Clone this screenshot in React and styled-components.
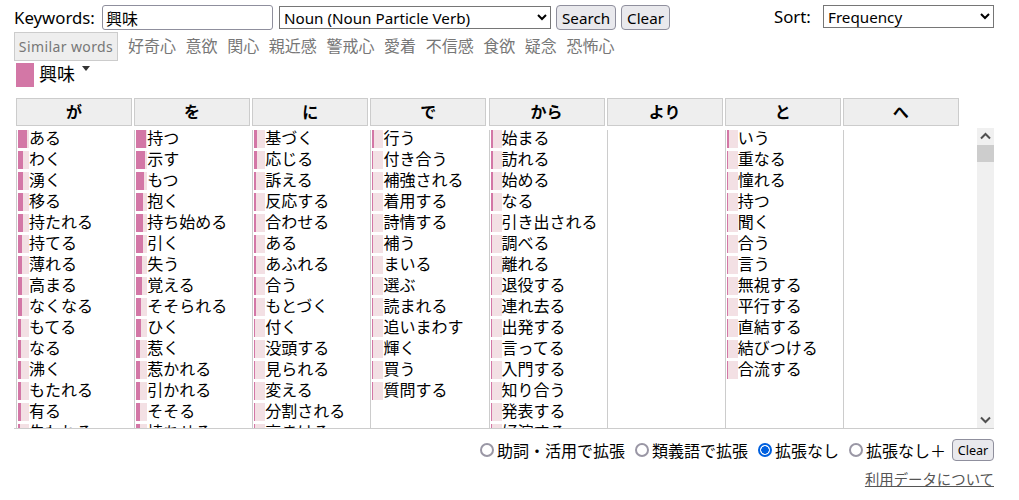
import React from "react";
import styled, { createGlobalStyle } from "styled-components";

const UI_FONT = `"Noto Sans", "Noto Sans CJK JP", sans-serif`;

const GlobalStyle = createGlobalStyle`
  html, body {
    margin: 0;
    background: #fff;
    color: #000;
    font-family: ${UI_FONT};
    font-size: 16px;
  }
`;

const similarWords = ["好奇心", "意欲", "関心", "親近感", "警戒心", "愛着", "不信感", "食欲", "疑念", "恐怖心"];

// [word, fill width in px out of 11]
const columns = [
  { head: "が", rows: [["ある", 9], ["わく", 5], ["湧く", 5], ["移る", 5], ["持たれる", 5], ["持てる", 4], ["薄れる", 4], ["高まる", 4], ["なくなる", 4], ["もてる", 3], ["なる", 3], ["沸く", 3], ["もたれる", 3], ["有る", 3], ["失われる", 2]] },
  { head: "を", rows: [["持つ", 10], ["示す", 9], ["もつ", 8], ["抱く", 7], ["持ち始める", 7], ["引く", 7], ["失う", 6], ["覚える", 6], ["そそられる", 5], ["ひく", 5], ["惹く", 4], ["惹かれる", 4], ["引かれる", 4], ["そそる", 4], ["持ちせる", 4]] },
  { head: "に", rows: [["基づく", 3], ["応じる", 3], ["訴える", 2], ["反応する", 2], ["合わせる", 2], ["ある", 2], ["あふれる", 2], ["合う", 2], ["もとづく", 2], ["付く", 1], ["没頭する", 1], ["見られる", 1], ["変える", 1], ["分割される", 1], ["高まける", 1]] },
  { head: "で", rows: [["行う", 2], ["付き合う", 1], ["補強される", 1], ["着用する", 1], ["詩情する", 1], ["補う", 1], ["まいる", 1], ["選ぶ", 1], ["読まれる", 1], ["追いまわす", 1], ["輝く", 1], ["買う", 1], ["質問する", 1]] },
  { head: "から", rows: [["始まる", 2], ["訪れる", 2], ["始める", 2], ["なる", 2], ["引き出される", 1], ["調べる", 1], ["離れる", 1], ["退役する", 1], ["連れ去る", 1], ["出発する", 1], ["言ってる", 1], ["入門する", 1], ["知り合う", 1], ["発表する", 1], ["好演する", 1]] },
  { head: "より", rows: [] },
  { head: "と", rows: [["いう", 2], ["重なる", 1], ["憧れる", 1], ["持つ", 1], ["聞く", 1], ["合う", 1], ["言う", 1], ["無視する", 1], ["平行する", 1], ["直結する", 1], ["結びつける", 1], ["合流する", 1]] },
  { head: "へ", rows: [] },
];

const App = () => {
  return (
    <Page>
      <GlobalStyle />
      <SearchBar>
        <FieldLabel>Keywords:</FieldLabel>
        <KeywordInput type="text" defaultValue="興味" />
        <PatternSelect defaultValue="npv">
          <option value="npv">Noun (Noun Particle Verb)</option>
        </PatternSelect>
        <Button>Search</Button>
        <Button>Clear</Button>
        <SortGroup>
          <SortLabel>Sort:</SortLabel>
          <SortSelect defaultValue="freq">
            <option value="freq">Frequency</option>
          </SortSelect>
        </SortGroup>
      </SearchBar>

      <SimilarRow>
        <SimilarTag>Similar words</SimilarTag>
        {similarWords.map((w) => (
          <SimilarWord key={w}>{w}</SimilarWord>
        ))}
      </SimilarRow>

      <LegendRow>
        <Swatch />
        <LegendWord>興味</LegendWord>
        <Caret />
      </LegendRow>

      <HeaderRow>
        {columns.map((c) => (
          <HeaderCell key={c.head}>{c.head}</HeaderCell>
        ))}
      </HeaderRow>

      <ResultsFrame>
        <Results>
          <ColumnGrid>
            {columns.map((c) => (
              <Column key={c.head}>
                {c.rows.map(([word, fill]) => (
                  <Row key={word}>
                    <Bar>
                      <BarFill $fill={fill} />
                    </Bar>
                    <Word>{word}</Word>
                  </Row>
                ))}
              </Column>
            ))}
          </ColumnGrid>
        </Results>
        <ScrollBar>
          <ScrollArrow viewBox="0 0 17 17">
            <path d="M4 10.5 L8.5 6 L13 10.5" />
          </ScrollArrow>
          <ScrollThumb />
          <ScrollTrack />
          <ScrollArrow viewBox="0 0 17 17">
            <path d="M4 6.5 L8.5 11 L13 6.5" />
          </ScrollArrow>
        </ScrollBar>
      </ResultsFrame>

      <OptionsRow>
        <RadioLabel>
          <Radio type="radio" name="expand" />
          助詞・活用で拡張
        </RadioLabel>
        <RadioLabel>
          <Radio type="radio" name="expand" />
          類義語で拡張
        </RadioLabel>
        <RadioLabel>
          <Radio type="radio" name="expand" defaultChecked />
          拡張なし
        </RadioLabel>
        <RadioLabel>
          <Radio type="radio" name="expand" />
          拡張なし＋
        </RadioLabel>
        <SmallButton>Clear</SmallButton>
      </OptionsRow>

      <FooterRow>
        <DataLink href="#">利用データについて</DataLink>
      </FooterRow>
    </Page>
  );
};

//Styled Components

const Page = styled.div`
  width: 980px;
  margin-left: 14px;
`;

const SearchBar = styled.div`
  display: flex;
  align-items: center;
  height: 25px;
  padding-top: 5px;
`;

const FieldLabel = styled.span`
  width: 88px;
  font-size: 16.8px;
  line-height: 25px;
  white-space: nowrap;
`;

const KeywordInput = styled.input`
  box-sizing: border-box;
  width: 171px;
  height: 25px;
  padding: 0 3px;
  border: 1px solid #8f8f9d;
  border-radius: 3px;
  font: 16px ${UI_FONT};
  color: #000;
`;

const PatternSelect = styled.select`
  box-sizing: border-box;
  width: 272px;
  height: 23px;
  margin: 0 5px 0 6px;
  padding: 0;
  border: 1px solid #767676;
  border-radius: 0;
  background: #fff;
  font: 15.2px ${UI_FONT};
  color: #000;
`;

const Button = styled.button`
  box-sizing: border-box;
  height: 25px;
  margin-right: 5px;
  padding: 0 5px;
  border: 1px solid #8f8f9d;
  border-radius: 4px;
  background: #e9e9ed;
  font: 15.2px ${UI_FONT};
  color: #000;
`;

const SortGroup = styled.div`
  display: flex;
  align-items: center;
  margin-left: auto;
  margin-top: -2px;
`;

const SortLabel = styled.span`
  width: 49px;
  font-size: 16.8px;
  white-space: nowrap;
`;

const SortSelect = styled.select`
  box-sizing: border-box;
  width: 171px;
  height: 23px;
  padding: 0;
  border: 1px solid #767676;
  border-radius: 0;
  background: #fff;
  font: 15.2px ${UI_FONT};
  color: #000;
`;

const SimilarRow = styled.div`
  display: flex;
  align-items: center;
  gap: 9.6px;
  height: 29px;
  margin-top: 2px;
`;

const SimilarTag = styled.div`
  box-sizing: border-box;
  display: flex;
  align-items: center;
  justify-content: center;
  width: 104px;
  height: 29px;
  margin-right: 0.4px;
  border: 1px solid #ccc;
  background: #eee;
  font-size: 14px;
  letter-spacing: 0.4px;
  white-space: nowrap;
  color: #777;
`;

const SimilarWord = styled.span`
  margin-bottom: 2px;
  color: #777;
  line-height: 27px;
  font-family: "Noto Sans CJK JP", sans-serif;
`;

const LegendRow = styled.div`
  display: flex;
  height: 24px;
  margin: 2px 0 11px 2px;
`;

const Swatch = styled.div`
  width: 18px;
  height: 24px;
  background: #d377a6;
`;

const LegendWord = styled.span`
  margin-left: 5px;
  font: 18px/20px "Noto Sans CJK JP", sans-serif;
`;

const Caret = styled.div`
  width: 0;
  height: 0;
  margin: 3px 0 0 7px;
  border-left: 4px solid transparent;
  border-right: 4px solid transparent;
  border-top: 5px solid #333;
`;

const HeaderRow = styled.div`
  display: grid;
  grid-template-columns: repeat(8, 118.13px);
  height: 28px;
  margin: 0 0 2px 2px;
`;

const HeaderCell = styled.div`
  box-sizing: border-box;
  width: 116px;
  height: 28px;
  border: 1px solid #ccc;
  background: #eee;
  font: bold 16px/24px "Noto Sans CJK JP", sans-serif;
  text-align: center;
`;

const ResultsFrame = styled.div`
  display: flex;
  height: 300px;
  border-bottom: 1px solid #ccc;
`;

const Results = styled.div`
  flex: 1;
  overflow: hidden;
`;

const ColumnGrid = styled.div`
  display: grid;
  grid-template-columns: repeat(8, 118.13px);
  box-sizing: border-box;
  height: 100%;
  padding: 2px 0 0 2px;
`;

const Column = styled.div`
  box-sizing: border-box;
  padding-left: 1px;
  border-left: 1px solid #ccc;
`;

const Row = styled.div`
  display: flex;
  height: 18px;
  margin-bottom: 3px;
`;

const Bar = styled.div`
  width: 11px;
  height: 18px;
  background: #f3e0e4;
`;

const BarFill = styled.div`
  width: ${(p) => p.$fill}px;
  height: 100%;
  background: #d377a6;
`;

const Word = styled.span`
  font-family: "Noto Sans CJK JP", sans-serif;
  line-height: 14px;
  white-space: nowrap;
`;

const ScrollBar = styled.div`
  display: flex;
  flex-direction: column;
  width: 17px;
  background: #f0f0f0;
`;

const ScrollArrow = styled.svg`
  flex: none;
  width: 17px;
  height: 17px;
  fill: none;
  stroke: #505050;
  stroke-width: 2;
`;

const ScrollThumb = styled.div`
  flex: none;
  height: 17px;
  background: #cdcdcd;
`;

const ScrollTrack = styled.div`
  flex: 1;
`;

const OptionsRow = styled.div`
  display: flex;
  justify-content: flex-end;
  align-items: center;
  height: 22px;
  margin-top: 10px;
`;

const RadioLabel = styled.label`
  display: flex;
  align-items: center;
  margin-right: 10px;
  margin-top: -1px;
  font-family: "Noto Sans CJK JP", sans-serif;
  white-space: nowrap;
`;

const Radio = styled.input`
  appearance: none;
  box-sizing: border-box;
  width: 14px;
  height: 14px;
  margin: 1px 3px 0 0;
  border: 2px solid #9a97a5;
  border-radius: 50%;
  background: #fff;

  &:checked {
    border-color: #0060df;
    background: radial-gradient(circle, #0060df 0 3.5px, #fff 4px);
  }
`;

const SmallButton = styled.button`
  box-sizing: border-box;
  width: 42px;
  height: 22px;
  margin-left: -4px;
  padding: 0;
  border: 1px solid #8f8f9d;
  border-radius: 4px;
  background: #e9e9ed;
  font: 12.6px ${UI_FONT};
  color: #000;
`;

const FooterRow = styled.div`
  display: flex;
  justify-content: flex-end;
  margin-top: 8px;
`;

const DataLink = styled.a`
  font: 14.4px/20px "Noto Sans CJK JP", sans-serif;
  color: #555;
  text-decoration: underline;
`;

export default App;
